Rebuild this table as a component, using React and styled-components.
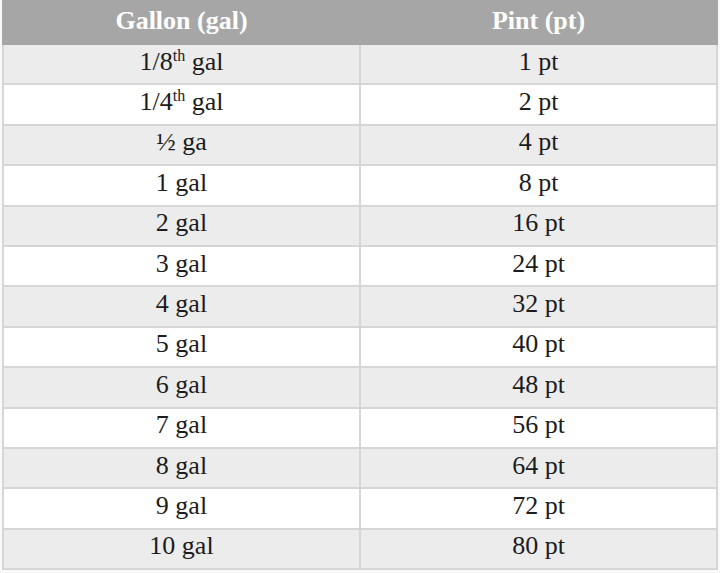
import React from 'react';
import styled, { createGlobalStyle } from 'styled-components';

const GlobalStyle = createGlobalStyle`
  html, body {
    margin: 0;
    padding: 0;
    background: #ffffff;
  }
`;

const rows = [
  [<>1/8<Sup>th</Sup> gal</>, '1 pt'],
  [<>1/4<Sup>th</Sup> gal</>, '2 pt'],
  ['½ ga', '4 pt'],
  ['1 gal', '8 pt'],
  ['2 gal', '16 pt'],
  ['3 gal', '24 pt'],
  ['4 gal', '32 pt'],
  ['5 gal', '40 pt'],
  ['6 gal', '48 pt'],
  ['7 gal', '56 pt'],
  ['8 gal', '64 pt'],
  ['9 gal', '72 pt'],
  ['10 gal', '80 pt'],
];

function Sup({ children }) {
  return <SupText>{children}</SupText>;
}

export default function App() {
  return (
    <Page>
      <GlobalStyle />
      <Table>
        <thead>
          <tr>
            <HeadCell>Gallon (gal)</HeadCell>
            <HeadCell>Pint (pt)</HeadCell>
          </tr>
        </thead>
        <tbody>
          {rows.map((r, i) => (
            <Row key={i} $shaded={i % 2 === 0}>
              <Cell>{r[0]}</Cell>
              <Cell>{r[1]}</Cell>
            </Row>
          ))}
        </tbody>
      </Table>
    </Page>
  );
}

const Page = styled.div`
  width: 720px;
  height: 573px;
  padding: 0 2px;
  box-sizing: border-box;
  background: #fafafa;
`;

const Table = styled.table`
  width: 100%;
  border-collapse: collapse;
  table-layout: fixed;
  font-family: "Liberation Serif", "Times New Roman", serif;
  font-size: 26px;
  color: #1c1c1c;
`;

const HeadCell = styled.th`
  height: 43px;
  padding: 0 0 4px;
  background: #a6a6a6;
  color: #ffffff;
  font-weight: bold;
  font-size: 26px;
  text-align: center;
  border: 2px solid #a6a6a6;
  box-sizing: border-box;
`;

const Row = styled.tr`
  height: 40.4px;
  background: ${p => (p.$shaded ? '#ececec' : '#ffffff')};
`;

const Cell = styled.td`
  padding: 0 0 5px;
  text-align: center;
  border: 2px solid #d6d6d6;
  box-sizing: border-box;
  line-height: 1;
`;

const SupText = styled.sup`
  font-size: 16px;
  vertical-align: 9px;
  line-height: 0;
`;
